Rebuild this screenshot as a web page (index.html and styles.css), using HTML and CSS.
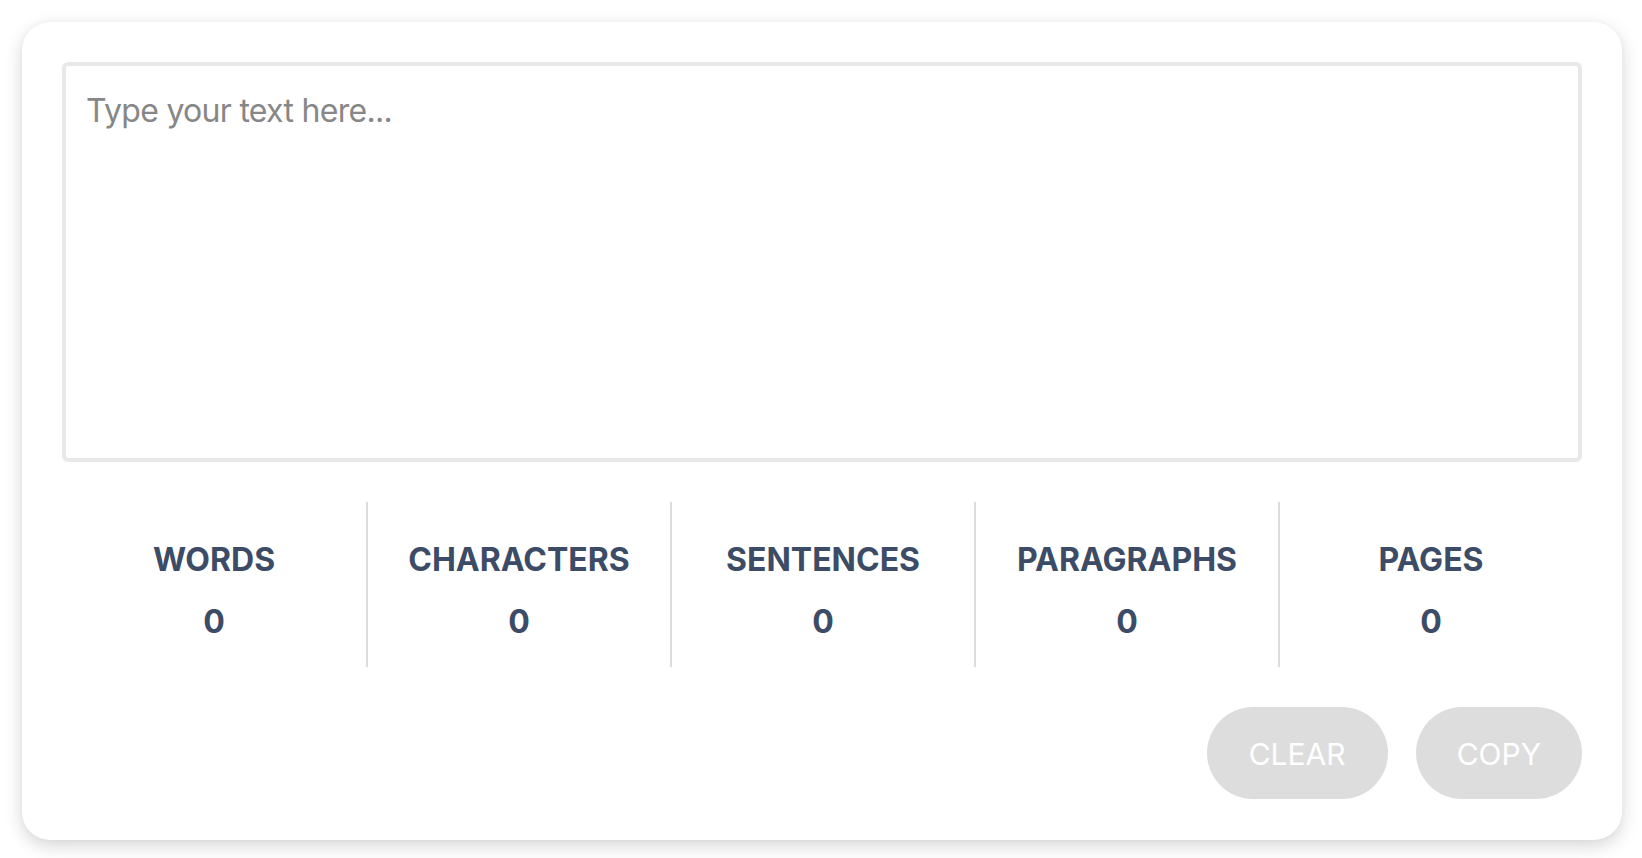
FILE: index.html
```html
<!DOCTYPE html>
<html lang="en">
<head>
<meta charset="utf-8">
<title>Word Counter</title>
<link rel="stylesheet" href="styles.css">
</head>
<body>
<main class="card">
  <textarea class="editor" placeholder="Type your text here..."></textarea>
  <section class="stats">
    <div class="stat"><div class="stat-label">WORDS</div><div class="stat-value">0</div></div>
    <div class="stat"><div class="stat-label">CHARACTERS</div><div class="stat-value">0</div></div>
    <div class="stat"><div class="stat-label">SENTENCES</div><div class="stat-value">0</div></div>
    <div class="stat"><div class="stat-label">PARAGRAPHS</div><div class="stat-value">0</div></div>
    <div class="stat"><div class="stat-label">PAGES</div><div class="stat-value">0</div></div>
  </section>
  <div class="actions">
    <button class="btn" type="button">CLEAR</button>
    <button class="btn" type="button">COPY</button>
  </div>
</main>
</body>
</html>
```

FILE: styles.css
```css
* { box-sizing: border-box; }
html, body { margin: 0; padding: 0; background: #ffffff; }
body {
  font-family: Inter, "Noto Sans", "Liberation Sans", sans-serif;
  height: 858px;
  overflow: hidden;
}
.card {
  margin: 22px 20px 0 22px;
  height: 818px;
  background: #ffffff;
  border-radius: 28px;
  box-shadow: 0 6px 18px rgba(0, 0, 0, 0.16), 0 0 6px rgba(0, 0, 0, 0.03);
  padding: 40px 40px 41px 40px;
  display: flex;
  flex-direction: column;
}
.editor {
  display: block;
  width: 100%;
  height: 400px;
  border: 4px solid #e8e8e8;
  border-radius: 6px;
  padding: 26px 20px 20px 20px;
  font-family: inherit;
  font-size: 32px;
  line-height: 38px;
  letter-spacing: -0.7px;
  color: #333;
  resize: none;
  outline: none;
  background: #fff;
}
.editor::placeholder { color: #878787; }
.stats {
  margin-top: 40px;
  height: 165px;
  display: grid;
  grid-template-columns: repeat(5, 1fr);
}
.stat {
  display: flex;
  flex-direction: column;
  align-items: center;
  padding-top: 39px;
  color: #3c4c66;
  font-weight: 700;
  font-size: 32px;
  line-height: 38px;
}
.stat + .stat { border-left: 2px solid #dcdcdc; }
.stat-value { margin-top: 24px; }
.actions {
  margin-top: 40px;
  display: flex;
  justify-content: flex-end;
  gap: 28px;
}
.btn {
  height: 92px;
  padding: 2px 42px 0 42px;
  border: none;
  border-radius: 46px;
  background: #dddddd;
  color: #ffffff;
  font-family: inherit;
  font-size: 30px;
  font-weight: 400;
  cursor: pointer;
}
.btn + .btn { padding: 2px 41px 0 41px; }
```
